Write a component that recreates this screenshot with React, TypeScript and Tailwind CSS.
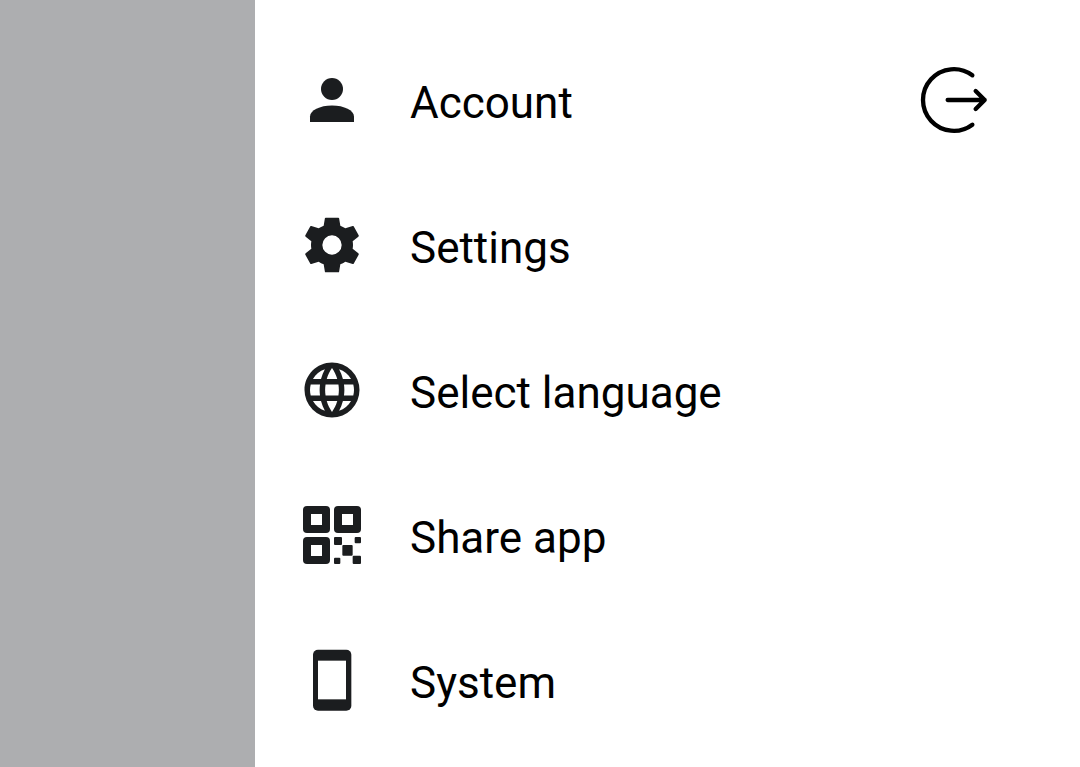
import type { ReactNode } from "react";

function Icon({ viewBox, children }: { viewBox: string; children: ReactNode }) {
  return (
    <svg aria-hidden="true" viewBox={viewBox} className="size-[66px] shrink-0 fill-[#1b1d1f]">
      {children}
    </svg>
  );
}

const person = (
  <Icon viewBox="0 0 24 24">
    <circle cx="12" cy="8" r="4" />
    <path d="M12 14c-4.42 0-8 1.79-8 4v2h16v-2c0-2.21-3.58-4-8-4z" />
  </Icon>
);

const gear = (
  <Icon viewBox="27 21 198 198">
    <path
      fillRule="evenodd"
      d="M107 38H145Q147 38 147.300 40L151 62Q159 65 166 70L188 63Q190 62 191 64L206 91Q207 93 205 95L188 109Q189 115 189 120T188 131L205 145Q207 147 206 149L191 176Q190 178 188 177L166 170Q159 175 151 178L147.300 200Q147 202 145 202H107Q105 202 104.700 200L101 178Q93 175 86 170L64 177Q62 178 61 176L46 149Q45 147 47 145L64 131Q63 125 63 120T64 109L47 95Q45 93 46 91L61 64Q62 62 64 63L86 70Q93 65 101 62L104.700 40Q105 38 107 38ZM126 91A29 29 0 1 0 126 149A29 29 0 1 0 126 91Z"
    />
  </Icon>
);

const globe = (
  <Icon viewBox="0 0 24 24">
    <path d="M16.36,14C16.44,13.34 16.5,12.68 16.5,12C16.5,11.32 16.44,10.66 16.36,10H19.74C19.9,10.64 20,11.31 20,12C20,12.69 19.9,13.36 19.74,14H16.36M14.59,19.56C15.19,18.45 15.65,17.25 15.97,16H18.92C17.96,17.65 16.43,18.93 14.59,19.56M14.34,14H9.66C9.56,13.34 9.5,12.68 9.5,12C9.5,11.32 9.56,10.65 9.66,10H14.34C14.43,10.65 14.5,11.32 14.5,12C14.5,12.68 14.43,13.34 14.34,14M12,19.96C11.17,18.76 10.5,17.43 10.09,16H13.91C13.5,17.43 12.83,18.76 12,19.96M8,8H5.08C6.03,6.34 7.57,5.06 9.4,4.44C8.8,5.55 8.35,6.75 8,8M5.08,16H8C8.35,17.25 8.8,18.45 9.4,19.56C7.57,18.93 6.03,17.65 5.08,16M4.26,14C4.1,13.36 4,12.69 4,12C4,11.31 4.1,10.64 4.26,10H7.64C7.56,10.66 7.5,11.32 7.5,12C7.5,12.68 7.56,13.34 7.64,14H4.26M12,4.03C12.83,5.23 13.5,6.57 13.91,8H10.09C10.5,6.57 11.17,5.23 12,4.03M18.92,8H15.97C15.65,6.75 15.19,5.55 14.59,4.44C16.43,5.07 17.96,6.34 18.92,8M12,2C6.47,2 2,6.5 2,12A10,10 0 0,0 12,22A10,10 0 0,0 22,12A10,10 0 0,0 12,2Z" />
  </Icon>
);

const qrCode = (
  <Icon viewBox="27 21 198 198">
    {[
      [39, 33],
      [132, 33],
      [39, 126],
    ].map(([x, y]) => (
      <g key={`${x}-${y}`}>
        <rect x={x} y={y} width="81" height="81" rx="12" />
        <rect x={x + 24} y={y + 24} width="33" height="33" className="fill-white" />
      </g>
    ))}
    <rect x="132" y="126" width="24" height="24" rx="3" />
    <rect x="194" y="126" width="19" height="19" rx="3" />
    <rect x="157" y="150" width="31" height="32" rx="3" />
    <rect x="132" y="188" width="19" height="19" rx="3" />
    <rect x="188" y="182" width="25" height="25" rx="3" />
  </Icon>
);

const phone = (
  <Icon viewBox="27 21 198 198">
    <rect x="69" y="29" width="115" height="183" rx="15" />
    <rect x="84" y="62" width="84" height="116" className="fill-white" />
  </Icon>
);

const items = [
  { label: "Account", icon: person },
  { label: "Settings", icon: gear },
  { label: "Select language", icon: globe },
  { label: "Share app", icon: qrCode },
  { label: "System", icon: phone },
];

export default function App() {
  return (
    <div className="flex min-h-screen bg-white font-['Roboto',sans-serif] text-black">
      <button type="button" aria-label="Close menu" className="w-[255px] shrink-0 bg-[#adaeb0]" />
      <nav aria-label="Main menu" className="flex-1 pt-7 pr-[86px] pl-11">
        <ul className="flex flex-col gap-px">
          {items.map(({ label, icon }) => (
            <li key={label} className="flex h-36 items-center justify-between">
              <a href="#" className="flex flex-1 items-center gap-[45px]">
                {icon}
                <span className="pt-1.5 text-[44px] leading-[60px]">{label}</span>
              </a>
              {label === "Account" && (
                <button type="button" aria-label="Log out" className="shrink-0">
                  <svg
                    aria-hidden="true"
                    viewBox="27 15 240 240"
                    className="size-20 fill-none stroke-black stroke-[13]"
                    strokeLinecap="round"
                    strokeLinejoin="round"
                  >
                    <path d="M202 61A92.500 92.500 0 1 0 202 209M128 135H239M212 108L239 135L212 162" />
                  </svg>
                </button>
              )}
            </li>
          ))}
        </ul>
      </nav>
    </div>
  );
}
